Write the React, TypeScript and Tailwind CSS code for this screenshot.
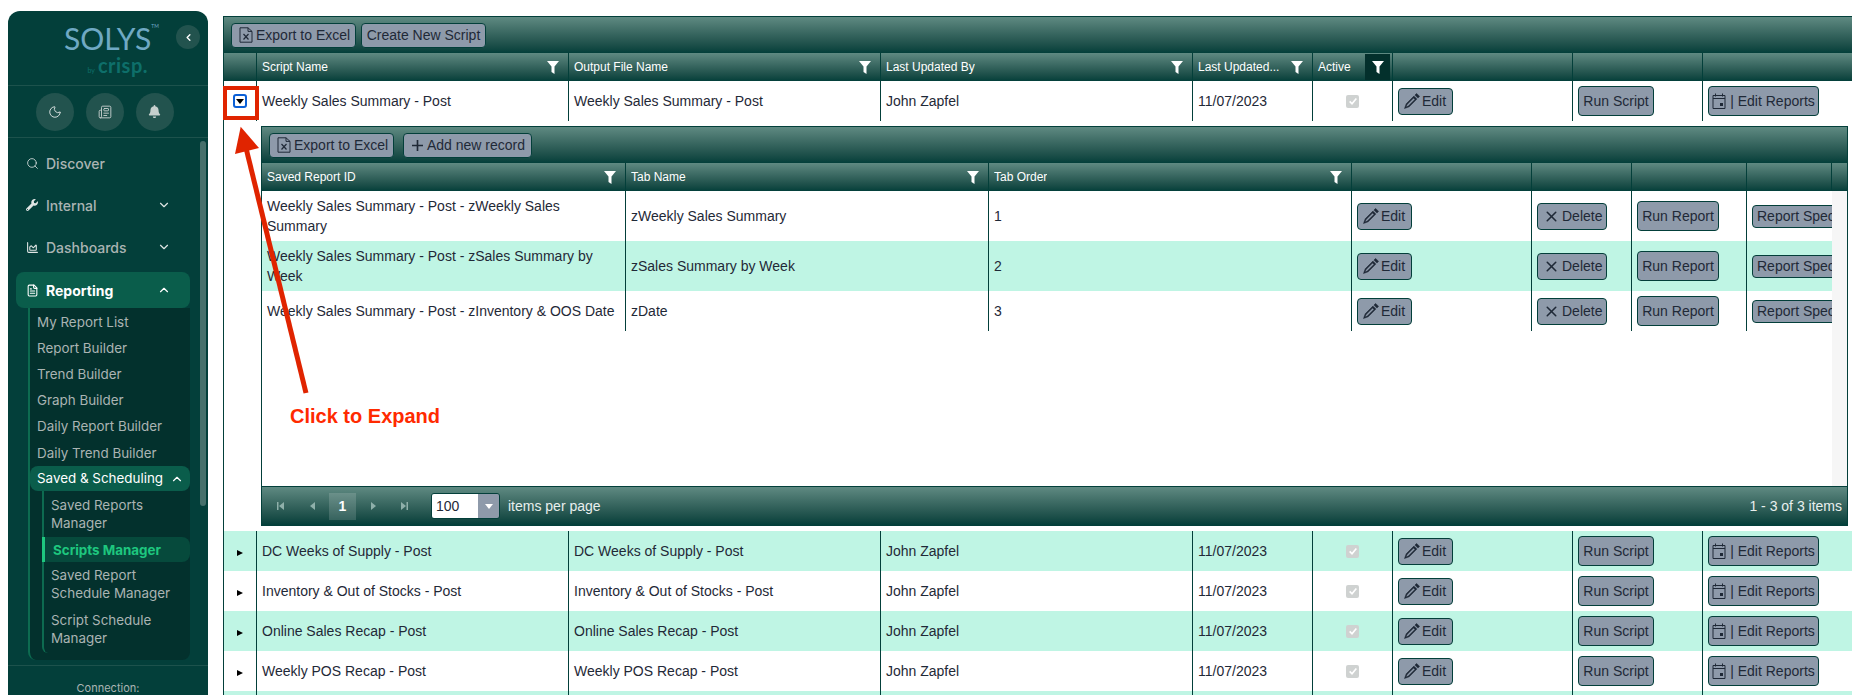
import { ChevronDown, ChevronLeft, ChevronUp, Moon, Newspaper, Search, X } from "lucide-react";
import { FaBell, FaWrench } from "react-icons/fa";
import { LuChartArea, LuFileText } from "react-icons/lu";

const gradient = "bg-gradient-to-b from-[#5f8a82] to-[#033f3a]";
const btn =
  "flex items-center rounded-[4px] border border-[#033f3a] bg-[#8e9aaa] text-[14px] text-[#1f2937] whitespace-nowrap";

const outerCols = ["w-[33px]", "w-[312px]", "w-[312px]", "w-[312px]", "w-[120px]", "w-[80px]", "w-[180px]", "w-[130px]"];

const scripts = [
  "DC Weeks of Supply - Post",
  "Inventory & Out of Stocks - Post",
  "Online Sales Recap - Post",
  "Weekly POS Recap - Post",
];

const reports = [
  { id: "Weekly Sales Summary - Post - zWeekly Sales Summary", tab: "zWeekly Sales Summary", order: 1, h: "h-[50px]", mint: false },
  { id: "Weekly Sales Summary - Post - zSales Summary by Week", tab: "zSales Summary by Week", order: 2, h: "h-[50px]", mint: true },
  { id: "Weekly Sales Summary - Post - zInventory & OOS Date", tab: "zDate", order: 3, h: "h-[40px]", mint: false },
];

const Funnel = ({ className = "" }: { className?: string }) => (
  <svg viewBox="0 0 12 13" className={`h-[13px] w-[12px] fill-white ${className}`}>
    <path d="M0 0h12L7.5 5.6V13L4.5 11V5.6z" />
  </svg>
);

const Pencil = () => (
  <svg viewBox="0 0 16 16" className="h-[16px] w-[16px] shrink-0 fill-[#1f2937]">
    <path d="M12.6 0.4l3 3-1.7 1.7-3-3zM9.9 3.1l3 3-7.7 7.7-4.7 1.7 1.7-4.7zM2.9 11.7l-0.9 2.3 2.3-0.9 6.6-6.6-1.4-1.4z" stroke="#1f2937" strokeWidth="0.5" />
  </svg>
);

const ExcelIcon = () => (
  <svg viewBox="0 0 14 16" className="h-[16px] w-[14px] shrink-0 fill-none stroke-[#1f2937]" strokeWidth="1">
    <path d="M1 0.8h8l4 3.6v10.8H1zM9 0.8v3.6h4" />
    <path d="M4.5 7l5 5.5M9.5 7l-5 5.5" strokeWidth="1.2" />
  </svg>
);

const CalendarIcon = () => (
  <svg viewBox="0 0 14 16" className="h-[16px] w-[14px] shrink-0 fill-none stroke-[#1f2937]" strokeWidth="1">
    <path d="M1 2.5h12v13H1zM1 5.5h12M3.5 0.5v3M10.5 0.5v3" />
    <rect x="8" y="10" width="3" height="3" fill="#1f2937" stroke="none" />
  </svg>
);

const Check = () => (
  <span className="flex h-[13px] w-[13px] items-center justify-center rounded-[2px] bg-[#cfd2d1]">
    <svg viewBox="0 0 12 12" className="h-[10px] w-[10px] fill-none stroke-white" strokeWidth="2">
      <path d="M2 6.5l2.8 2.8L10 3" />
    </svg>
  </span>
);

const Cell = ({ w, children, className = "" }: { w: string; children?: React.ReactNode; className?: string }) => (
  <div className={`flex h-full shrink-0 items-center border-r border-[#033f3a] px-[5px] text-[14px] leading-[20px] text-[#1f2937] ${w} ${className}`}>
    {children}
  </div>
);

const Head = ({ w, label, filter = true }: { w: string; label?: string; filter?: boolean }) => (
  <div className={`flex h-full shrink-0 items-center justify-between border-r border-[#033f3a] pl-[5px] pr-[9px] text-[12px] text-white ${w}`}>
    <span className="truncate">{label}</span>
    {filter && <Funnel className="shrink-0" />}
  </div>
);

const ScriptRow = ({ name, mint, open }: { name: string; mint: boolean; open?: boolean }) => (
  <div className={`flex h-[40px] shrink-0 ${mint ? "bg-[#bff5e4]" : "bg-white"}`}>
    <div className="flex h-full w-[33px] shrink-0 items-center justify-center border-r border-[#033f3a]">
      {open ? (
        <span className="flex h-[14px] w-[14px] items-center justify-center rounded-[3px] border-2 border-[#0b5fd6]">
          <span className="border-x-[4px] border-t-[5px] border-x-transparent border-t-black" />
        </span>
      ) : (
        <span className="mt-[3px] border-y-[3.5px] border-l-[6px] border-y-transparent border-l-black" />
      )}
    </div>
    <Cell w={outerCols[1]}>{name}</Cell>
    <Cell w={outerCols[2]}>{name}</Cell>
    <Cell w={outerCols[3]}>John Zapfel</Cell>
    <Cell w={outerCols[4]}>11/07/2023</Cell>
    <Cell w={outerCols[5]} className="justify-center">
      <Check />
    </Cell>
    <Cell w={outerCols[6]}>
      <button className={`${btn} h-[27px] w-[55px] gap-[2px] pl-[5px]`}>
        <Pencil />
        Edit
      </button>
    </Cell>
    <Cell w={outerCols[7]}>
      <button className={`${btn} h-[30px] w-[76px] justify-center`}>Run Script</button>
    </Cell>
    <div className="flex h-full flex-1 items-center px-[5px]">
      <button className={`${btn} h-[30px] w-[111px] justify-center gap-[4px]`}>
        <CalendarIcon />| Edit Reports
      </button>
    </div>
  </div>
);

const PagerButton = ({ d, className = "" }: { d: string; className?: string }) => (
  <svg viewBox="0 0 10 10" className={`h-[10px] w-[10px] shrink-0 fill-[#8fb0aa] ${className}`}>
    <path d={d} />
  </svg>
);

const SubGrid = () => (
  <div className="flex h-[400px] w-[1587px] flex-col border border-[#033f3a] bg-white">
    <div className={`flex h-[36px] shrink-0 items-center gap-[9px] pl-[7px] ${gradient}`}>
      <button className={`${btn} h-[25px] w-[125px] gap-[3px] pl-[7px]`}>
        <ExcelIcon />
        Export to Excel
      </button>
      <button className={`${btn} h-[25px] w-[129px] gap-[4px] pl-[8px]`}>
        <svg viewBox="0 0 12 12" className="h-[11px] w-[11px] stroke-[#1f2937]" strokeWidth="1.8">
          <path d="M6 0v12M0 6h12" />
        </svg>
        Add new record
      </button>
    </div>
    <div className={`flex h-[28px] shrink-0 ${gradient}`}>
      <Head w="w-[364px]" label="Saved Report ID" />
      <Head w="w-[363px]" label="Tab Name" />
      <Head w="w-[363px]" label="Tab Order" />
      <Head w="w-[180px]" filter={false} />
      <Head w="w-[100px]" filter={false} />
      <Head w="w-[115px]" filter={false} />
      <Head w="w-[85px]" filter={false} />
    </div>
    <div className="flex min-h-0 flex-1">
      <div className="w-[1570px] shrink-0">
        {reports.map((r) => (
          <div key={r.order} className={`flex ${r.h} ${r.mint ? "bg-[#bff5e4]" : "bg-white"}`}>
            <Cell w="w-[364px]">{r.id}</Cell>
            <Cell w="w-[363px]">{r.tab}</Cell>
            <Cell w="w-[363px]">{r.order}</Cell>
            <Cell w="w-[180px]">
              <button className={`${btn} h-[27px] w-[55px] gap-[2px] pl-[5px]`}>
                <Pencil />
                Edit
              </button>
            </Cell>
            <Cell w="w-[100px]">
              <button className={`${btn} h-[27px] w-[70px] gap-[2px] pl-[5px]`}>
                <X className="h-[17px] w-[17px]" strokeWidth={2.2} />
                Delete
              </button>
            </Cell>
            <Cell w="w-[115px]">
              <button className={`${btn} h-[30px] w-[82px] justify-center`}>Run Report</button>
            </Cell>
            <div className="flex h-full w-[85px] shrink-0 items-center overflow-hidden pl-[5px]">
              <button className={`${btn} h-[23px] w-[100px] shrink-0 pl-[4px]`}>Report Specs</button>
            </div>
          </div>
        ))}
      </div>
      <div className="flex-1 bg-[#f6f6f6]" />
    </div>
    <div className={`flex h-[39px] shrink-0 items-center border-t border-[#033f3a] pl-[14px] pr-[5px] text-[14px] text-[#e8efee] ${gradient}`}>
      <PagerButton d="M1 1h1.5v8H1zM8 1v8L3 5z" />
      <PagerButton d="M7 1v8L2 5z" className="ml-[22px]" />
      <span className="ml-[11px] flex h-[27px] w-[27px] items-center justify-center bg-white/15 font-bold text-white">1</span>
      <PagerButton d="M3 1v8l5-4z" className="ml-[12px]" />
      <PagerButton d="M2 1v8l5-4zM7.5 1H9v8H7.5z" className="ml-[21px]" />
      <div className="ml-[22px] flex h-[26px] w-[69px] overflow-hidden rounded-[3px] border border-[#033f3a]">
        <span className="flex flex-1 items-center bg-white pl-[4px] text-[#1f2937]">100</span>
        <span className="flex w-[21px] items-center justify-center bg-[#8e9aaa]">
          <span className="border-x-[4px] border-t-[5px] border-x-transparent border-t-white" />
        </span>
      </div>
      <span className="ml-[8px]">items per page</span>
      <span className="ml-auto">1 - 3 of 3 items</span>
    </div>
  </div>
);

const topNav = [
  { label: "Discover", icon: <Search className="h-[13px] w-[13px]" strokeWidth={1.5} />, chevron: false },
  { label: "Internal", icon: <FaWrench className="h-[12px] w-[12px]" />, chevron: true },
  { label: "Dashboards", icon: <LuChartArea className="h-[13px] w-[13px]" />, chevron: true },
];

const Sidebar = () => (
  <aside className="relative ml-[8px] mt-[11px] flex h-[684px] w-[200px] shrink-0 flex-col rounded-t-[12px] bg-[#033f3a] font-['Inter',sans-serif] text-[#aab4b3]">
    <div className="relative h-[75px] shrink-0 border-b border-[#1d524c] pl-[56px] pt-[10px]">
      <div className="flex h-[34px] items-start font-['Lato',sans-serif] text-[#6fa9c4]">
        <span className="text-[30px] font-normal leading-[34px]">SOLYS</span>
        <span className="mt-[3px] text-[5px] leading-none">TM</span>
      </div>
      <div className="flex w-[84px] items-baseline justify-end gap-[3px] font-['Lato',sans-serif] text-[#0e6f6a]">
        <span className="text-[7px]">by</span>
        <span className="text-[20px] font-bold leading-[20px] tracking-[0.5px]">crisp.</span>
      </div>
      <span className="absolute left-[168px] top-[14px] flex h-[24px] w-[24px] items-center justify-center rounded-full bg-[#22534e]">
        <ChevronLeft className="h-[11px] w-[11px] text-white" strokeWidth={3} />
      </span>
    </div>
    <div className="flex h-[52px] shrink-0 items-center justify-center gap-[12px] border-b border-[#1d524c] pr-[7px]">
      <span className="flex h-[38px] w-[38px] items-center justify-center rounded-full bg-[#22534e]">
        <Moon className="h-[14px] w-[14px] text-[#dfe5e4]" strokeWidth={1.6} />
      </span>
      <span className="flex h-[38px] w-[38px] items-center justify-center rounded-full bg-[#22534e]">
        <Newspaper className="h-[14px] w-[14px] text-[#c6cfcd]" strokeWidth={1.6} />
      </span>
      <span className="flex h-[38px] w-[38px] items-center justify-center rounded-full bg-[#22534e]">
        <FaBell className="h-[13px] w-[13px] text-[#c6cfcd]" />
      </span>
    </div>
    <span className="absolute left-[192px] top-[130px] h-[365px] w-[6px] rounded-[3px] bg-[#46706b]" />
    <nav className="flex shrink-0 flex-col pl-[8px] pt-[7px] text-[14px] font-medium">
      {topNav.map((n) => (
        <div key={n.label} className="mb-[6px] flex h-[36px] w-[174px] items-center pl-[10px] pr-[19px]">
          <span className="flex w-[20px] shrink-0 text-[#dfe5e4]">{n.icon}</span>
          <span className="flex-1">{n.label}</span>
          {n.chevron && <ChevronDown className="h-[14px] w-[14px] text-[#dfe5e4]" />}
        </div>
      ))}
      <div className="mt-[1px] flex h-[36px] w-[174px] items-center rounded-[8px] bg-[#0a5d4b] pl-[10px] pr-[19px] font-bold text-white">
        <span className="flex w-[20px] shrink-0">
          <LuFileText className="h-[13px] w-[13px]" />
        </span>
        <span className="flex-1">Reporting</span>
        <ChevronUp className="h-[14px] w-[14px]" />
      </div>
      <div className="flex h-[352px] w-[174px]">
        <div className="ml-[12px] w-[162px] rounded-b-[8px] border-l-2 border-[#0d6b50] bg-[#03312d] pt-[1px] text-[13.4px] font-normal">
          {["My Report List", "Report Builder", "Trend Builder", "Graph Builder", "Daily Report Builder"].map((t) => (
            <div key={t} className="flex h-[26px] items-center pl-[7px]">
              {t}
            </div>
          ))}
          <div className="flex h-[27px] items-center pl-[7px] pt-[1px]">Daily Trend Builder</div>
          <div className="flex h-[25px] items-center justify-between whitespace-nowrap rounded-[8px] bg-[#0a5d4b] pl-[7px] pr-[6px] text-white">
            Saved &amp; Scheduling
            <ChevronUp className="h-[14px] w-[14px]" />
          </div>
          <div className="ml-[12px] h-[162px] rounded-bl-[6px] border-l-2 border-[#0d6b50] leading-[18px]">
            <div className="h-[46px] pl-[7px] pt-[5px]">
              Saved Reports
              <br />
              Manager
            </div>
            <div className="-ml-[2px] flex h-[25px] items-center rounded-r-[8px] border-l-[3px] border-[#1ec77f] bg-[#064a3c] pl-[8px] font-bold text-[#1ec77f]">
              Scripts Manager
            </div>
            <div className="h-[45px] pl-[7px] pt-[4px]">
              Saved Report
              <br />
              Schedule Manager
            </div>
            <div className="h-[43px] pl-[7px] pt-[4px]">
              Script Schedule
              <br />
              Manager
            </div>
          </div>
        </div>
      </div>
    </nav>
    <div className="mt-[5px] flex-1 border-t border-[#1d524c] pt-[14px] text-center text-[11px]">Connection:</div>
  </aside>
);

export default function App() {
  return (
    <div className="relative flex h-[695px] w-[1852px] overflow-hidden bg-white font-['Liberation_Sans',sans-serif]">
      <Sidebar />
      <main className="ml-[15px] mt-[16px] min-w-0 flex-1 overflow-hidden">
        <div className="flex w-[1700px] flex-col border-l border-t border-[#033f3a]">
          <div className={`flex h-[36px] items-center gap-[5px] pl-[7px] ${gradient}`}>
            <button className={`${btn} h-[25px] w-[125px] gap-[3px] pl-[7px]`}>
              <ExcelIcon />
              Export to Excel
            </button>
            <button className={`${btn} h-[25px] w-[125px] justify-center`}>Create New Script</button>
          </div>
          <div className={`flex h-[28px] ${gradient}`}>
            <Head w={outerCols[0]} filter={false} />
            <Head w={outerCols[1]} label="Script Name" />
            <Head w={outerCols[2]} label="Output File Name" />
            <Head w={outerCols[3]} label="Last Updated By" />
            <Head w={outerCols[4]} label="Last Updated..." />
            <div className="flex h-full w-[80px] shrink-0 items-center justify-between border-r border-[#033f3a] pl-[5px] pr-[2px] text-[12px] text-white">
              Active
              <span className="flex h-[26px] w-[25px] items-center justify-center bg-[#03302c]">
                <Funnel />
              </span>
            </div>
            <Head w={outerCols[6]} filter={false} />
            <Head w={outerCols[7]} filter={false} />
          </div>
          <ScriptRow name="Weekly Sales Summary - Post" mint={false} open />
          <div className="h-[410px] pl-[37px] pt-[5px]">
            <SubGrid />
          </div>
          {scripts.map((s, i) => (
            <ScriptRow key={s} name={s} mint={i % 2 === 0} />
          ))}
          <ScriptRow name="" mint />
        </div>
      </main>

      {/* annotation drawn over the screenshot */}
      <span className="absolute left-[223px] top-[86px] h-[34px] w-[36px] border-4 border-[#e02400]" />
      <svg viewBox="0 0 1852 695" className="pointer-events-none absolute left-0 top-0 h-[695px] w-[1852px]">
        <line x1="306" y1="393" x2="246" y2="148" stroke="#e02400" strokeWidth="5" />
        <polygon points="240.7,126.7 235,154 259,148" fill="#e02400" />
      </svg>
      <span className="absolute left-[290px] top-[404px] text-[20px] font-bold leading-[24px] text-[#ff2a00]">Click to Expand</span>
    </div>
  );
}
